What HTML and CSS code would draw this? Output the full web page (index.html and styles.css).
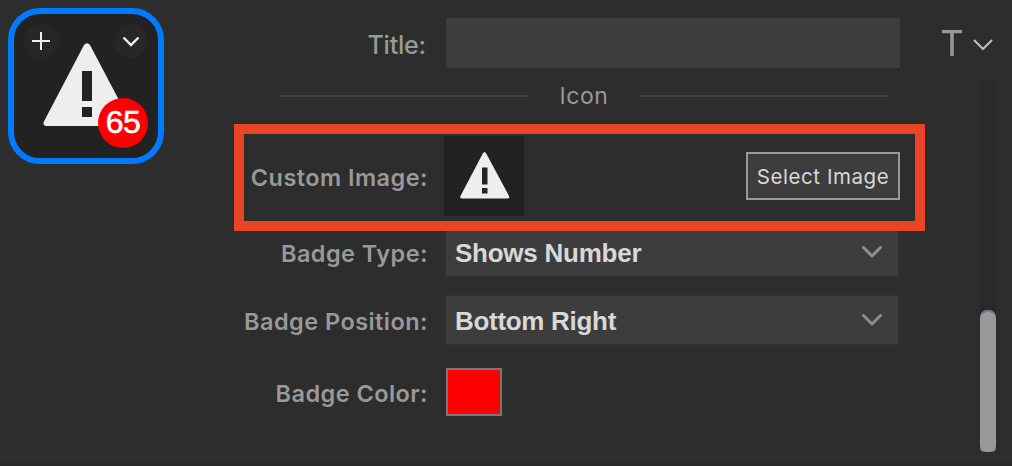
FILE: index.html
```html
<!DOCTYPE html>
<html lang="en">
<head>
<meta charset="utf-8">
<title>Key settings</title>
<link rel="stylesheet" href="styles.css">
</head>
<body>
<main class="panel">
  <div class="key">
    <svg class="key-art" viewBox="0 0 90 86"><path d="M41 3Q44 -.5 47 3L87.500 80Q88.500 84 85 84H3Q0 84 .700 80Z" fill="#eee"/><path d="M39 29h10v30H39zM39 65h10v10H39z" fill="#222"/></svg>
    <span class="round add"><svg width="34" height="34" viewBox="0 0 34 34"><path d="M8 17H26M17 8V26" stroke="#eee" stroke-width="2"/></svg></span>
    <span class="round more"><svg width="34" height="34" viewBox="0 0 34 34"><path d="M9.5 13.5 17 21l7.500-7.500" fill="none" stroke="#eee" stroke-width="2.400"/></svg></span>
    <span class="badge">65</span>
  </div>
  <form class="form">
    <div class="row title-row"><label class="label title-label">Title:</label><div class="input"></div></div>
    <div class="divider"><i class="line"></i><span class="divider-text">Icon</span><i class="line"></i></div>
    <div class="highlight">
      <label class="label image-label">Custom Image:</label>
      <div class="thumb"><svg width="80" height="80" viewBox="0 0 80 80"><path d="M38.800 17.500Q40.500 14.500 42.200 17.500L64.800 59.500Q66 62.500 63.500 62.500H18Q15.500 62.500 16.500 60Z" fill="#eee"/><path d="M38 31.500h5.500v17H38zM38 52h5.500v5.500H38z" fill="#222"/></svg></div>
      <button type="button" class="select-image">Select Image</button>
    </div>
    <div class="row type-row"><label class="label type-label">Badge Type:</label><div class="select type-value"><span>Shows Number</span><svg class="chevron" width="22" height="14" viewBox="0 0 22 14"><path d="m2.500 2.500 8.500 8.500 8.500-8.500"/></svg></div></div>
    <div class="row position-row"><label class="label position-label">Badge Position:</label><div class="select position-value"><span>Bottom Right</span><svg class="chevron" width="22" height="14" viewBox="0 0 22 14"><path d="m2.500 2.500 8.500 8.500 8.500-8.500"/></svg></div></div>
    <div class="row color-row"><label class="label color-label">Badge Color:</label><div class="swatch"></div></div>
  </form>
  <aside class="side">
    <div class="text-tool"><svg width="52" height="30" viewBox="0 0 52 30"><path d="M0 1.500H20M10 1.500V26" stroke="#999" stroke-width="3.500" fill="none"/><path d="m32 10 9 9 9-9" stroke="#bbb" stroke-width="2.200" fill="none"/></svg></div>
    <div class="track"><div class="thumb-bar"></div></div>
  </aside>
</main>
</body>
</html>
```
FILE: styles.css
```css
* { box-sizing: border-box; }
body { margin: 0; background: #2d2d2d; font-family: Inter, "Liberation Sans", sans-serif; }
.panel { width: 1012px; height: 466px; display: flex; overflow: hidden; border-bottom: 3px solid #292729; }
.key { position: relative; flex: none; width: 156px; height: 156px; margin: 8px 70px 0 8px; border: 6px solid #007aff; border-radius: 32px; background: #222; }
.key-art { position: absolute; left: 29px; top: 28px; width: 90px; height: 86px; }
.round { position: absolute; top: 10px; width: 34px; height: 34px; border-radius: 50%; background: #272727; }
.round svg { display: block; }
.add { left: 10px; }
.more { left: 100px; }
.badge { position: absolute; left: 84px; top: 84px; width: 50px; height: 50px; border-radius: 50%; background: #f00; color: #fff; font: 32px/48px "Liberation Sans", sans-serif; letter-spacing: -.5px; text-align: center; -webkit-text-stroke: .6px #fff; }
.form { flex: none; width: 691px; display: flex; flex-direction: column; }
.row { display: flex; align-items: center; }
.label { width: 194px; flex: none; margin-right: 18px; padding-top: 3px; text-align: right; white-space: nowrap; color: #999; font-size: 23.5px; font-weight: 600; line-height: 30px; letter-spacing: .45px; }
.title-row { height: 50px; margin-top: 18px; }
.title-label { width: 192px; margin-right: 20px; font-size: 25px; font-weight: 500; letter-spacing: -.2px; }
.input { width: 454px; height: 50px; background: #3d3d3d; }
.divider { height: 56px; padding: 0 37px 0 46px; display: flex; align-items: center; }
.line { flex: none; width: 248px; height: 2px; background: #3f3f3f; }
.divider-text { flex: 1; text-align: center; color: #999; font-size: 23px; letter-spacing: .6px; }
.highlight { position: relative; z-index: 1; height: 107px; border: 10px solid #eb4326; padding: 2px 15px 5px 0; display: flex; align-items: center; background: #2d2d2d; }
.image-label { width: 184px; margin-right: 16px; padding-top: 4px; }
.thumb { width: 80px; height: 80px; background: #222; }
.thumb svg { display: block; }
.select-image { width: 154px; height: 48px; margin-left: auto; padding: 2px 0 0; border: 2px solid #999; background: #3d3d3d; color: #d8d8d8; font: 20.500px/42px Inter, sans-serif; letter-spacing: .55px; white-space: nowrap; }
.type-row { height: 48px; margin-top: -3px; }
.position-row { height: 48px; margin-top: 20px; }
.color-row { height: 48px; margin-top: 24px; }
.select { width: 452px; height: 48px; padding: 0 15px 0 9px; display: flex; align-items: center; justify-content: space-between; background: #3d3d3d; box-shadow: 0 0 0 2px #303030; color: #d8d8d8; font: bold 26px/48px "Liberation Sans", sans-serif; white-space: nowrap; }
.select span { padding-top: 2px; }
.type-value { letter-spacing: -.25px; }
.position-value { letter-spacing: -.3px; }
.chevron { fill: none; stroke: #8e8e92; stroke-width: 3; stroke-linecap: round; }
.swatch { width: 56px; height: 48px; border: 2px solid #777; background: #f00; }
.side { flex: 1; display: flex; flex-direction: column; }
.text-tool { height: 80px; padding: 30px 0 0 17px; }
.text-tool svg { display: block; }
.track { width: 16px; height: 372px; margin-left: 55px; padding-top: 230px; background: linear-gradient(90deg, #262626, #2a2a2a 30%, #2a2a2a 70%, #262626); }
.thumb-bar { height: 142px; border-radius: 7px 7px 4px 4px; background: radial-gradient(8px 8px at 8px 10px, #999 98%, #718096) top / 16px 10px no-repeat, radial-gradient(8px 8px at 8px 2px, #999 98%, #718096) bottom / 16px 10px no-repeat, linear-gradient(#999, #999) 0 10px / 16px 122px no-repeat; }
```
